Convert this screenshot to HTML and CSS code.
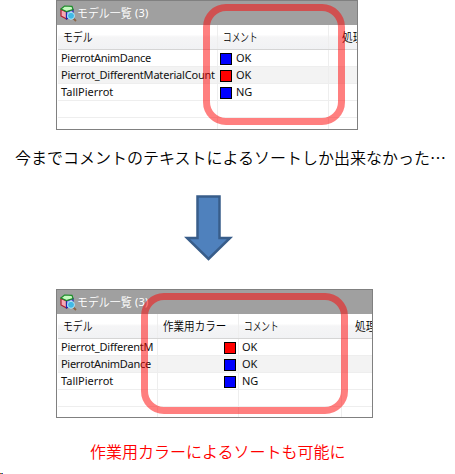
FILE: index.html
```html
<!DOCTYPE html>
<html lang="ja">
<head>
<meta charset="utf-8">
<title>モデル一覧</title>
<link rel="stylesheet" href="styles.css">
</head>
<body>
<svg class="defs" aria-hidden="true">
  <symbol id="cube" viewBox="0 0 17 17">
    <path d="M1 4.500 6.500 7v7L1 11z" fill="#f5a9b4" stroke="#b01c30" stroke-width="1.200"/>
    <path d="M6.500 7l6.500-2.500v7L6.500 14z" fill="#a0a4f5" stroke="#2328a8" stroke-width="1.200"/>
    <path d="M1 4 4.500 1l7.500.3L13 4.500 6.500 6.500z" fill="#c6fbc0" stroke="#1c8a2a" stroke-width="1.200"/>
    <path d="M13 13l3 3" stroke="#8a6548" stroke-width="1.800"/>
    <circle cx="11" cy="10.800" r="3.500" fill="#3fb9e6" stroke="#b0e5f5"/>
  </symbol>
</svg>
<main class="page">
  <section class="window before">
    <div class="title"><svg class="icon"><use href="#cube"/></svg><span class="title-text">モデル一覧</span><span class="count">(3)</span></div>
    <div class="row head"><div><span class="w-model">モデル</span></div><div><span class="w-comment">コメント</span></div><div><span class="w-proc">処理</span></div></div>
    <div class="row"><div><span class="n-dance">PierrotAnimDance</span></div><div class="tag"><i class="chip blue"></i>OK</div><div></div></div>
    <div class="row alt"><div><span class="n-diff">Pierrot_DifferentMaterialCount</span></div><div class="tag"><i class="chip red"></i>OK</div><div></div></div>
    <div class="row"><div><span class="n-tall">TallPierrot</span></div><div class="tag"><i class="chip blue"></i>NG</div><div></div></div>
    <div class="row"><div></div><div></div><div></div></div>
    <div class="row rest"><div></div><div></div><div></div></div>
    <div class="ring"></div>
  </section>
  <p class="caption">今までコメントのテキストによるソートしか出来なかった…</p>
  <svg class="arrow" viewBox="0 0 50 66"><path d="M13.5 1.5h22V43H46L24.5 64 3 43h10.500z" fill="#4f81bd" stroke="#385d8a" stroke-width="2.500"/></svg>
  <section class="window after">
    <div class="title"><svg class="icon"><use href="#cube"/></svg><span class="title-text">モデル一覧</span><span class="count">(3)</span></div>
    <div class="row head"><div><span class="w-model">モデル</span></div><div><span class="w-color">作業用カラー</span></div><div><span class="w-comment">コメント</span></div><div><span class="w-proc">処理</span></div></div>
    <div class="row"><div><span class="n-diff">Pierrot_DifferentM</span></div><div class="mark"><i class="chip red"></i></div><div>OK</div><div></div></div>
    <div class="row alt"><div><span class="n-dance">PierrotAnimDance</span></div><div class="mark"><i class="chip blue"></i></div><div>OK</div><div></div></div>
    <div class="row"><div><span class="n-tall">TallPierrot</span></div><div class="mark"><i class="chip blue"></i></div><div>NG</div><div></div></div>
    <div class="row"><div></div><div></div><div></div><div></div></div>
    <div class="row rest"><div></div><div></div><div></div><div></div></div>
    <div class="ring"></div>
  </section>
  <p class="caption result">作業用カラーによるソートも可能に</p>
  <div class="dots"><i></i><i></i><i></i></div>
</main>
</body>
</html>
```
FILE: styles.css
```css
* { box-sizing: border-box; }
body { margin: 0; background: #fff; color: #000; font-family: "Noto Sans", "Noto Sans CJK JP", sans-serif; }
.defs { position: absolute; width: 0; height: 0; }
.page { width: 455px; height: 474px; display: flex; flex-direction: column; overflow: hidden; }
.window { position: relative; flex: none; margin-left: 56px; border: 1px solid #808080; background: #fff; }
.before { width: 302px; height: 130px; --cols: 160px 111px 1fr; }
.after { width: 317px; height: 129px; margin-top: 28px; --cols: 100px 81px 103px 1fr; }
.title { display: flex; align-items: center; height: 24px; padding-left: 3px; background: #a0a0a0; color: #fff; font-size: 12px; line-height: 24px; }
.icon { width: 17px; height: 17px; }
.title-text { display: inline-block; width: 55px; margin-left: 0; font-family: "Noto Sans CJK JP", sans-serif; font-weight: 350; white-space: nowrap; transform: scaleX(.91); transform-origin: left center; }
.count { margin-left: 3px; font-size: 11px; letter-spacing: .2px; }
.row { display: grid; grid-template-columns: var(--cols); height: 17px; margin-left: 1px; border-bottom: 1px solid #eee; color: #111; font-size: 11px; line-height: 16px; }
.row > div { padding-left: 3px; border-right: 1px solid #eee; overflow: hidden; white-space: nowrap; }
.row > div:last-child { border-right: 0; }
.row.alt { background: #f3f3f3; }
.row.rest { height: 11px; border-bottom: 0; }
.after .rest { height: 10px; }
.row.head { height: 25px; background: linear-gradient(#fff 40%, #f5f5f6 50%, #f1f2f4); border-bottom-color: #d5d5d5; color: #000; font-family: "Noto Sans CJK JP", sans-serif; font-weight: 350; font-size: 12px; line-height: 24px; }
.row.head > div { padding-left: 5px; }
.row span { display: inline-block; transform-origin: left center; }
.n-dance { letter-spacing: -.3px; }
.n-diff { letter-spacing: -.2px; }
.w-model { transform: scaleX(.82); }
.w-comment { transform: scaleX(.72); }
.w-color { transform: scaleX(.88); }
.w-proc { margin-left: 8px; transform: scaleX(.9); }
.row > .tag { display: flex; align-items: center; gap: 4px; padding-left: 2px; }
.row > .mark { display: flex; align-items: center; justify-content: flex-end; padding-right: 2px; }
.chip { width: 12px; height: 12px; margin-top: 1px; border: 1px solid #000; }
.blue { background: #00f; }
.red { background: #f00; }
.ring { position: absolute; border: 7px solid rgba(255, 0, 0, .5); border-radius: 23px; }
.before .ring { left: 146px; top: 3px; width: 142px; height: 121px; }
.after .ring { left: 84px; top: 3px; width: 207px; height: 121px; }
.caption { flex: none; margin: 15px 0 0 15px; height: 24px; font: 350 16px/24px "Noto Sans CJK JP", sans-serif; white-space: nowrap; }
.arrow { flex: none; width: 50px; height: 66px; margin: 26px 0 0 184px; }
.result { margin: 21px 0 0 90px; color: #f00; }
.dots { display: flex; margin-top: 10px; }
.dots i { width: 1px; height: 1px; background: #c33; }
.dots i + i { background: #3a3; }
.dots i + i + i { background: #33c; }
```
